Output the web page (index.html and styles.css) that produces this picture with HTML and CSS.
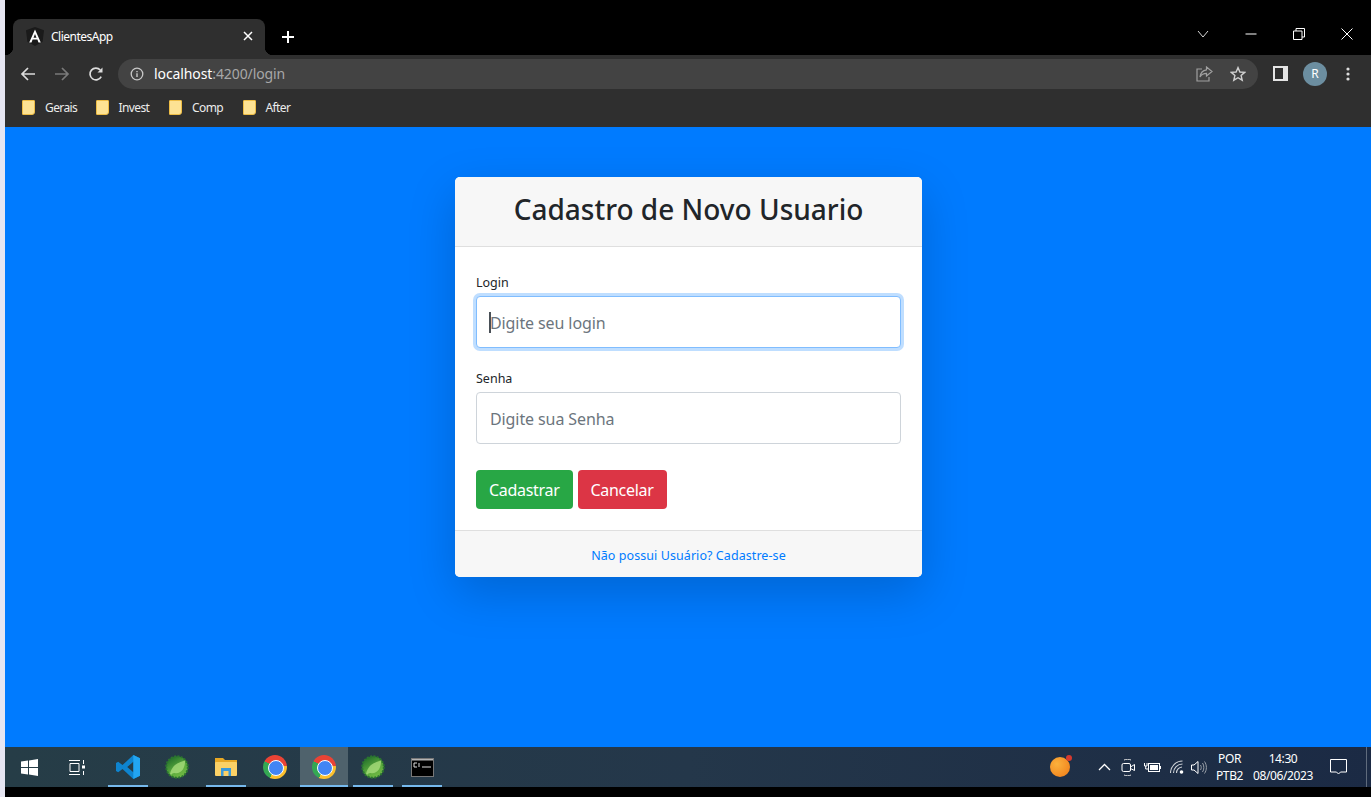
FILE: index.html
```html
<!DOCTYPE html>
<html>
  <head>
    <title>ClientesApp</title>
    <link rel="stylesheet" href="styles.css">
  </head>
  <body>
    <div class="screen">
      <!-- browser title bar -->
      <div class="titlebar">
        <div class="tab">
          <svg class="tab-logo" width="18" height="19" viewBox="0 0 18 19">
            <path d="M9 0 L18 3.2 L16.6 14.8 L9 19 L1.4 14.8 L0 3.2 Z" fill="#1a1a1a"/>
            <path d="M9 2.5 L3.2 15.5 H5.5 L6.6 12.6 H11.4 L12.5 15.5 H14.8 Z M7.5 10.8 L9 7 L10.5 10.8 Z" fill="#fff" fill-rule="evenodd"/>
          </svg>
          <span class="tab-title">ClientesApp</span>
          <svg class="tab-close" width="10" height="10" viewBox="0 0 10 10">
            <path d="M1 1 L9 9 M9 1 L1 9" stroke="#fff" stroke-width="1.5"/>
          </svg>
        </div>
        <svg class="new-tab" width="14" height="14" viewBox="0 0 14 14">
          <path d="M7 1 V13 M1 7 H13" stroke="#fff" stroke-width="2"/>
        </svg>
        <div class="window-controls">
          <div class="win-btn">
            <svg width="12" height="8" viewBox="0 0 12 8"><path d="M1 1 L6 7 L11 1" fill="none" stroke="#d8d8d8"/></svg>
          </div>
          <div class="win-btn">
            <svg width="12" height="2" viewBox="0 0 12 2"><path d="M0.5 1 H11.5" stroke="#fff"/></svg>
          </div>
          <div class="win-btn">
            <svg width="12" height="12" viewBox="0 0 12 12"><path d="M0.5 3 H9 V11.5 H0.5 Z M3 3 V0.5 H11.5 V9 H9" fill="none" stroke="#fff"/></svg>
          </div>
          <div class="win-btn">
            <svg width="12" height="12" viewBox="0 0 12 12"><path d="M0.5 0.5 L11.5 11.5 M11.5 0.5 L0.5 11.5" stroke="#fff"/></svg>
          </div>
        </div>
      </div>

      <!-- address bar -->
      <div class="toolbar">
        <svg class="nav-icon" width="16" height="16" viewBox="0 0 16 16">
          <path d="M15 8 H2 M8 2 L2 8 L8 14" fill="none" stroke="#dcdcdc" stroke-width="1.7"/>
        </svg>
        <svg class="nav-icon" width="16" height="16" viewBox="0 0 16 16">
          <path d="M1 8 H14 M8 2 L14 8 L8 14" fill="none" stroke="#7a7a7a" stroke-width="1.7"/>
        </svg>
        <svg class="nav-icon" width="16" height="16" viewBox="0 0 16 16">
          <path d="M13.2 10.6 A5.9 5.9 0 1 1 12.3 4" fill="none" stroke="#dcdcdc" stroke-width="1.7"/>
          <path d="M14.5 1.5 V6.5 H9.5 Z" fill="#dcdcdc"/>
        </svg>
        <div class="omnibox">
          <svg class="info-icon" width="14" height="14" viewBox="0 0 14 14">
            <circle cx="7" cy="7" r="5.8" fill="none" stroke="#c8c8c8" stroke-width="1.3"/>
            <path d="M7 6.2 V10 M7 4 V5.3" stroke="#c8c8c8" stroke-width="1.4"/>
          </svg>
          <span class="url"><span class="url-host">localhost</span>:4200/login</span>
          <svg class="omni-icon" width="17" height="16" viewBox="0 0 17 16">
            <path d="M6 3 H1 V15 H13 V11" fill="none" stroke="#a0a0a0" stroke-width="1.2"/>
            <path d="M10.5 1 L16 5.5 L10.5 10 V7.4 C7.5 7.4 5.5 8.5 4 11 C4.5 7 6.8 4.2 10.5 3.8 Z" fill="none" stroke="#a0a0a0" stroke-width="1.2"/>
          </svg>
          <svg class="omni-icon" width="16" height="16" viewBox="0 0 16 16">
            <path d="M8 1.6 L9.9 6 L14.7 6.4 L11.1 9.5 L12.2 14.2 L8 11.7 L3.8 14.2 L4.9 9.5 L1.3 6.4 L6.1 6 Z" fill="none" stroke="#d0d0d0" stroke-width="1.4"/>
          </svg>
        </div>
        <svg class="panel-icon" width="15" height="15" viewBox="0 0 15 15">
          <path d="M0 0 H15 V15 H0 Z M2 2 V13 H10 V2 Z" fill="#e4e4e4" fill-rule="evenodd"/>
        </svg>
        <div class="avatar">R</div>
        <svg class="menu-icon" width="4" height="14" viewBox="0 0 4 14">
          <circle cx="2" cy="2" r="1.6" fill="#dcdcdc"/>
          <circle cx="2" cy="7" r="1.6" fill="#dcdcdc"/>
          <circle cx="2" cy="12" r="1.6" fill="#dcdcdc"/>
        </svg>
      </div>

      <!-- bookmarks -->
      <div class="bookmarks">
        <div class="bookmark"><span class="folder"></span>Gerais</div>
        <div class="bookmark"><span class="folder"></span>Invest</div>
        <div class="bookmark"><span class="folder"></span>Comp</div>
        <div class="bookmark"><span class="folder"></span>After</div>
      </div>

      <!-- the page itself -->
      <div class="page">
        <div class="card">
          <div class="card-header">
            <h3>Cadastro de Novo Usuario</h3>
          </div>
          <form class="card-body">
            <div class="form-group">
              <label for="login">Login</label>
              <div class="field">
                <input class="form-control focused" type="text" id="login" placeholder="Digite seu login">
                <span class="caret"></span>
              </div>
            </div>
            <div class="form-group">
              <label for="senha">Senha</label>
              <input class="form-control" type="text" id="senha" placeholder="Digite sua Senha">
            </div>
            <div class="actions">
              <button class="btn btn-success" type="button">Cadastrar</button>
              <button class="btn btn-danger" type="button">Cancelar</button>
            </div>
          </form>
          <div class="card-footer">
            <a href="#">Não possui Usuário? Cadastre-se</a>
          </div>
        </div>
      </div>

      <!-- windows taskbar -->
      <div class="taskbar">
        <div class="task-left">
          <svg width="17" height="17" viewBox="0 0 17 17">
            <path d="M0 2.6 L7 1.6 V8 H0 Z M8 1.4 L17 0 V8 H8 Z M0 9 H7 V15.4 L0 14.4 Z M8 9 H17 V17 L8 15.6 Z" fill="#fff"/>
          </svg>
        </div>
        <div class="task-left">
          <svg width="16" height="15" viewBox="0 0 16 15">
            <path d="M0 0.5 H11 M0 14.5 H11 M1 3.5 H10 V11.5 H1 Z M14.5 0 V4 M14.5 11 V15" fill="none" stroke="#fff"/>
            <rect x="13" y="5.5" width="3" height="3" fill="#fff"/>
          </svg>
        </div>
        <div class="task-item open first">
          <svg width="24" height="24" viewBox="0 0 24 24">
            <path d="M17.3 0 L24 3.2 V20.8 L17.3 24 L6.5 13.9 L2.2 17.2 L0 16 V8 L2.2 6.8 L6.5 10.1 Z M17.6 6.6 L11.2 12 L17.6 17.4 Z" fill="#0e84cf" fill-rule="evenodd"/>
            <path d="M17.3 0 L24 3.2 V20.8 L17.3 24 Z" fill="#22a5f1"/>
          </svg>
        </div>
        <div class="task-item">
          <svg width="24" height="24" viewBox="0 0 24 24">
            <defs>
              <linearGradient id="springBody" x1="0.2" y1="0" x2="0.8" y2="1">
                <stop offset="0" stop-color="#1f6b2a"/>
                <stop offset="0.55" stop-color="#58a83c"/>
                <stop offset="1" stop-color="#76bd46"/>
              </linearGradient>
            </defs>
            <circle cx="12" cy="12" r="10.8" fill="url(#springBody)" stroke="#2a7430" stroke-width="2" stroke-dasharray="2 1.4"/>
            <path d="M5 19 C7 10 13 7.5 20 5.5 C20.5 13 16 19.5 9.5 18 C8 17.8 7 18.8 6 20 Z" fill="#a8dc7c" opacity="0.8"/>
          </svg>
        </div>
        <div class="task-item open">
          <svg width="22" height="18" viewBox="0 0 22 18">
            <path d="M0 0 H8 L10 2 H22 V6 H0 Z" fill="#e8a824"/>
            <rect y="4" width="22" height="14" rx="1" fill="#fbd166"/>
            <path d="M6 18 V10 H16 V18 H13.5 V13 H8.5 V18 Z" fill="#3b9ad9"/>
          </svg>
        </div>
        <div class="task-item"><span class="chrome-logo"></span></div>
        <div class="task-item open active"><span class="chrome-logo"></span></div>
        <div class="task-item open">
          <svg width="24" height="24" viewBox="0 0 24 24">
            <circle cx="12" cy="12" r="10.8" fill="url(#springBody)" stroke="#2a7430" stroke-width="2" stroke-dasharray="2 1.4"/>
            <path d="M5 19 C7 10 13 7.5 20 5.5 C20.5 13 16 19.5 9.5 18 C8 17.8 7 18.8 6 20 Z" fill="#a8dc7c" opacity="0.8"/>
          </svg>
        </div>
        <div class="task-item open">
          <svg width="23" height="19" viewBox="0 0 23 19">
            <rect width="23" height="19" fill="#000"/>
            <rect width="23" height="2.5" fill="#b4b4b4"/>
            <rect x="0.5" y="0.5" width="22" height="18" fill="none" stroke="#777"/>
            <path d="M3 5 H6 M3 5 V9 H6 M8 5 V9 M11 9 H20" fill="none" stroke="#ddd"/>
          </svg>
        </div>

        <div class="tray">
          <div class="tray-app"><span class="orange-dot"></span><span class="red-dot"></span></div>
          <svg class="tray-chevron" width="13" height="8" viewBox="0 0 13 8">
            <path d="M1 7 L6.5 1.5 L12 7" fill="none" stroke="#fff" stroke-width="1.3"/>
          </svg>
          <svg class="tray-camera" width="15" height="17" viewBox="0 0 15 17">
            <path d="M3 1 C5 0 8 0 10 1 M3 16 C5 17 8 17 10 16" fill="none" stroke="#ddd"/>
            <rect x="1" y="4.5" width="8.5" height="8" rx="1.5" fill="none" stroke="#fff"/>
            <path d="M9.5 8 L13.5 5.5 V11.5 L9.5 9.5" fill="none" stroke="#fff"/>
          </svg>
          <svg class="tray-battery" width="17" height="12" viewBox="0 0 17 12">
            <path d="M0.5 2 V5 H3 V2 M1.7 5 V8 H4" fill="none" stroke="#fff"/>
            <rect x="4.5" y="2.5" width="11" height="8" fill="none" stroke="#fff"/>
            <rect x="6" y="4" width="8" height="5" fill="#fff"/>
            <rect x="16" y="5" width="1" height="3" fill="#fff"/>
          </svg>
          <svg class="tray-wifi" width="15" height="14" viewBox="0 0 15 14">
            <path d="M0.5 13 A12 12 0 0 1 12.5 1 M3.5 13 A9 9 0 0 1 12.5 4 M6.5 13 A6 6 0 0 1 12 7" fill="none" stroke="#cfd3d8" stroke-width="1.1"/>
            <circle cx="11.5" cy="12" r="1.8" fill="#fff"/>
          </svg>
          <svg class="tray-volume" width="16" height="15" viewBox="0 0 16 15">
            <path d="M0.5 5 H3 L7 1.5 V13.5 L3 10 H0.5 Z" fill="none" stroke="#fff"/>
            <path d="M9.5 5 C10.5 6.5 10.5 8.5 9.5 10 M11.5 3 C13.3 5.5 13.3 9.5 11.5 12 M13.5 1.5 C16 5 16 10 13.5 13.5" fill="none" stroke="#9aa0a8"/>
          </svg>
          <div class="tray-lang"><span>POR</span><span>PTB2</span></div>
          <div class="tray-clock"><span>14:30</span><span>08/06/2023</span></div>
          <svg class="tray-notes" width="17" height="16" viewBox="0 0 17 16">
            <path d="M0.5 0.5 H16.5 V13 H10.5 L8.5 15 L6.5 13 H0.5 Z" fill="none" stroke="#fff"/>
          </svg>
          <span class="show-desktop"></span>
        </div>
      </div>
      <div class="bottom-strip"></div>
    </div>
  </body>
</html>
```

FILE: styles.css
```css
* {
  box-sizing: border-box;
}

html,
body {
  margin: 0;
  height: 100%;
  overflow: hidden;
}

body {
  font-family: "Noto Sans", "Open Sans", Arial, sans-serif;
  background-color: #e6e6f2;
}

.screen {
  display: flex;
  flex-direction: column;
  height: 797px;
  margin-left: 5px;
  background-color: #000;
}

/* title bar */
.titlebar {
  display: flex;
  align-items: flex-end;
  height: 55px;
  padding-left: 8px;
  background-color: #000;
}

.tab {
  position: relative;
  display: flex;
  align-items: center;
  width: 252px;
  height: 36px;
  padding: 0 12px 2px 13px;
  border-radius: 8px 8px 0 0;
  background-color: #2f2f2f;
  color: #fff;
  font-size: 12px;
}

.tab::before,
.tab::after {
  content: "";
  position: absolute;
  bottom: 0;
  width: 8px;
  height: 8px;
}

.tab::before {
  left: -8px;
  background: radial-gradient(circle at 0 0, #000 8px, #2f2f2f 8.5px);
}

.tab::after {
  right: -8px;
  background: radial-gradient(circle at 100% 0, #000 8px, #2f2f2f 8.5px);
}

.tab-title {
  flex: 1;
  margin-left: 7px;
  letter-spacing: -0.5px;
}

.new-tab {
  margin: 0 0 11px 16px;
}

.window-controls {
  display: flex;
  align-self: stretch;
  margin-left: auto;
}

.win-btn {
  display: flex;
  align-items: center;
  justify-content: center;
  width: 48px;
  height: 68px;
}

/* address bar */
.toolbar {
  display: flex;
  align-items: center;
  height: 37px;
  padding: 0 15px;
  background-color: #2f2f2f;
}

.nav-icon {
  flex: none;
  margin-right: 18px;
}

.omnibox {
  display: flex;
  flex: none;
  align-items: center;
  width: 1140px;
  height: 30px;
  margin-left: -4px;
  padding: 0 12px;
  border-radius: 15px;
  background-color: #434343;
}

.info-icon {
  flex: none;
  margin-right: 10px;
}

.url {
  flex: 1;
  color: #a8a8a8;
  font-size: 14px;
  letter-spacing: -0.1px;
}

.url-host {
  color: #fff;
}

.omni-icon {
  flex: none;
  margin-left: 17px;
}

.panel-icon {
  flex: none;
  margin-left: 15px;
}

.avatar {
  flex: none;
  width: 24px;
  height: 24px;
  margin-left: 15px;
  border-radius: 50%;
  background-color: #6c8ea0;
  color: #fff;
  font-size: 12px;
  line-height: 24px;
  text-align: center;
}

.menu-icon {
  flex: none;
  margin-left: 19px;
}

/* bookmarks */
.bookmarks {
  display: flex;
  align-items: center;
  height: 35px;
  padding: 0 0 4px 17px;
  background-color: #2f2f2f;
}

.bookmark {
  display: flex;
  align-items: center;
  width: 73.5px;
  color: #ececec;
  font-size: 12px;
  letter-spacing: -0.6px;
}

.folder {
  flex: none;
  width: 13px;
  height: 15px;
  margin-right: 10px;
  border: 1px solid #eebd45;
  border-radius: 1px 1px 3px 1px;
  background-color: #fde293;
}

/* page */
.page {
  display: flex;
  flex: none;
  justify-content: center;
  height: 620px;
  padding: 50px 0 0 1px;
  background-color: #007bff;
}

.card {
  display: flex;
  flex-direction: column;
  width: 467px;
  height: 400px;
  border-radius: 5px;
  background-color: #fff;
  box-shadow: 0 16px 48px rgba(0, 0, 0, 0.175);
  overflow: hidden;
}

.card-header {
  height: 70px;
  padding-top: 11px;
  border-bottom: 1px solid #dfdfdf;
  background-color: #f7f7f7;
  text-align: center;
}

.card-header h3 {
  margin: 0;
  color: #212529;
  font-size: 28px;
  font-weight: 500;
  line-height: 42px;
}

.card-body {
  flex: 1;
  padding: 26px 21px 0;
}

.form-group {
  margin-bottom: 21px;
}

.form-group label {
  display: block;
  height: 23px;
  color: #212529;
  font-size: 12.5px;
  line-height: 20px;
}

.field {
  position: relative;
}

.form-control {
  display: block;
  width: 100%;
  height: 52px;
  padding: 2px 13px 0;
  border: 1px solid #ced4da;
  border-radius: 4px;
  background-color: #fff;
  color: #495057;
  font-family: inherit;
  font-size: 16px;
  letter-spacing: -0.1px;
  outline: none;
}

.form-control::placeholder {
  color: #6c757d;
  opacity: 1;
}

.form-control.focused {
  border-color: #80bdff;
  box-shadow: 0 0 0 3px rgba(0, 123, 255, 0.25);
}

.caret {
  position: absolute;
  top: 16px;
  left: 13px;
  width: 2px;
  height: 21px;
  background-color: #495057;
}

.actions {
  display: flex;
  gap: 5px;
  margin-top: 26px;
}

.btn {
  height: 39px;
  padding: 0 13px;
  border: none;
  border-radius: 4px;
  color: #fff;
  font-family: inherit;
  font-size: 16px;
  letter-spacing: -0.3px;
}

.btn-success {
  background-color: #28a745;
}

.btn-danger {
  background-color: #dc3545;
}

.card-footer {
  height: 47px;
  border-top: 1px solid #dfdfdf;
  background-color: #f7f7f7;
  font-size: 12.5px;
  line-height: 49px;
  letter-spacing: 0.07px;
  text-align: center;
}

.card-footer a {
  color: #007bff;
  text-decoration: none;
}

/* taskbar */
.taskbar {
  display: flex;
  flex: none;
  align-items: center;
  height: 40px;
  background: linear-gradient(90deg, #263d47 0%, #24374a 50%, #1b2a44 100%);
}

.task-left {
  display: flex;
  flex: none;
  align-items: center;
  justify-content: center;
  width: 48px;
  height: 40px;
}

.task-item {
  display: flex;
  flex: none;
  align-items: center;
  justify-content: center;
  width: 48px;
  height: 40px;
  margin-right: 1px;
}

.task-item.first {
  margin-left: 3px;
}

.task-item.open {
  background: linear-gradient(#76b9ed, #76b9ed) center bottom / 40px 2px no-repeat;
}

.task-item.active {
  background: linear-gradient(#76b9ed, #76b9ed) center bottom / 48px 2px no-repeat, #4f626c;
}

.chrome-logo {
  position: relative;
  display: block;
  width: 24px;
  height: 24px;
  border-radius: 50%;
  background: conic-gradient(#ea4335 0 85deg, #fbc02d 85deg 205deg, #34a853 205deg 300deg, #ea4335 300deg);
}

.chrome-logo::after {
  content: "";
  position: absolute;
  top: 5px;
  left: 5px;
  width: 14px;
  height: 14px;
  border: 1.5px solid #fff;
  border-radius: 50%;
  background-color: #4285f4;
}

.tray {
  display: flex;
  align-items: center;
  height: 40px;
  margin-left: auto;
  color: #fff;
  font-size: 12px;
}

.tray-app {
  position: relative;
  width: 24px;
  height: 24px;
  margin-right: 26px;
}

.orange-dot {
  position: absolute;
  top: 2px;
  left: 2px;
  width: 20px;
  height: 20px;
  border-radius: 50%;
  background: radial-gradient(circle at 35% 35%, #fbb13c, #ef7a17);
}

.red-dot {
  position: absolute;
  top: 0;
  left: 18px;
  width: 6px;
  height: 6px;
  border-radius: 50%;
  background-color: #d63a2f;
}

.tray-chevron {
  margin-right: 10px;
}

.tray-camera {
  margin-right: 8px;
}

.tray-battery {
  margin-right: 9px;
}

.tray-wifi {
  margin-right: 6px;
}

.tray-volume {
  margin-right: 9px;
}

.tray-lang,
.tray-clock {
  display: flex;
  flex-direction: column;
  line-height: 17px;
  letter-spacing: -0.4px;
  text-align: center;
}

.tray-lang {
  width: 27px;
  margin-right: 10px;
}

.tray-clock {
  width: 60px;
  margin-right: 17px;
}

.tray-notes {
  margin-right: 19px;
}

.show-desktop {
  width: 1px;
  height: 40px;
  margin-right: 4px;
  background-color: #5f6b7c;
}

.bottom-strip {
  flex: 1;
  background-color: #000;
}
```
